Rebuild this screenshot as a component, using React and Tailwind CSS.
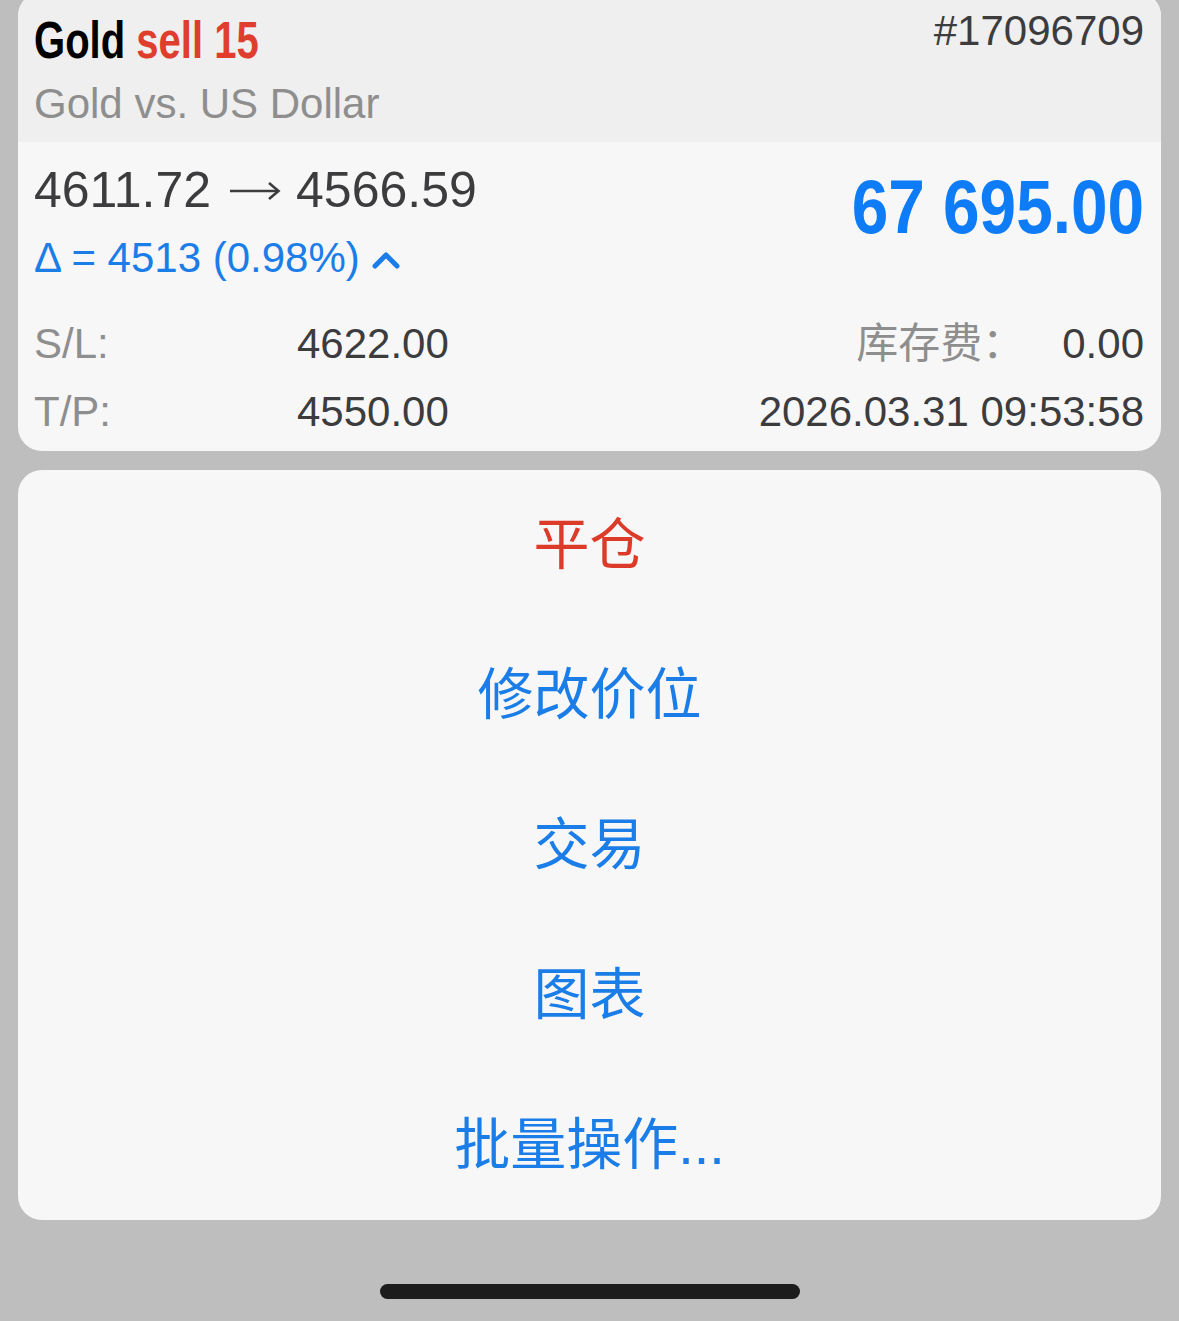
import React from "react";

const sans = { fontFamily: '"Liberation Sans", "Noto Sans CJK SC", Arial, sans-serif' };
const bold = { fontFamily: '"Liberation Sans", Arial, sans-serif' };

function MenuItem({ label, red }) {
  return (
    <div
      className={`h-[150px] flex items-center justify-center text-[56px] leading-none ${red ? "text-[#dc3b2a]" : "text-[#1b7de8]"}`}
      style={sans}
    >
      {label}
    </div>
  );
}

export default function App() {
  return (
    <div className="w-[1179px] h-[1321px] bg-[#bebebe] overflow-hidden flex flex-col items-center" style={sans}>
      {/* Position card */}
      <div className="w-[1143px] -mt-[8px] rounded-[24px] overflow-hidden bg-[#f7f7f7]">
        <div className="h-[150px] bg-[#efefef] pl-4 pr-[17px] flex justify-between items-start">
          <div className="flex flex-col">
            <div
              className="pt-[23px] text-[52px] leading-[50px] font-bold whitespace-nowrap origin-left scale-x-[0.77]"
              style={bold}
            >
              <span className="text-black">Gold</span>{" "}
              <span className="text-[#df3e2c]">sell 15</span>
            </div>
            <div className="mt-[18px] text-[42px] leading-[42px] text-[#8e8e8e]">Gold vs. US Dollar</div>
          </div>
          <div className="pt-[18px] text-[42px] leading-[42px] text-[#3c3c3e]">#17096709</div>
        </div>
        <div className="pl-4 pr-[17px] pb-[6px]">
          <div className="flex justify-between items-start">
            <div className="flex flex-col pt-[23px]">
              <div className="text-[50px] leading-[50px] text-[#3c3c3e] flex items-center">
                <span>4611.72</span>
                <svg width="52" height="24" viewBox="0 0 52 24" className="ml-[18px] mr-[15px] mt-[2px]">
                  <path d="M1 12 H49" stroke="#3c3c3e" strokeWidth="2.6" fill="none" />
                  <path d="M40 4 L49.5 12 L40 20" stroke="#3c3c3e" strokeWidth="2.6" fill="none" strokeLinejoin="miter" />
                </svg>
                <span>4566.59</span>
              </div>
              <div className="mt-[22px] text-[42px] leading-[42px] text-[#1b7de8] flex items-center">
                <span>Δ = 4513 (0.98%)</span>
                <svg width="28" height="20" viewBox="0 0 28 20" className="ml-[12px] mt-[4px]">
                  <path d="M3 16 L14 5 L25 16" fill="none" stroke="#1b7de8" strokeWidth="5" strokeLinecap="round" strokeLinejoin="round" />
                </svg>
              </div>
            </div>
            <div
              className="pt-[27px] text-[76px] leading-[76px] font-bold text-[#0d7cf6] whitespace-nowrap origin-right scale-x-[0.865]"
              style={bold}
            >
              67 695.00
            </div>
          </div>
          <div className="mt-[30px] flex justify-between h-[68px] items-center text-[42px]">
            <div className="flex">
              <span className="w-[263px] text-[#8e8e8e]">S/L:</span>
              <span className="text-[#3c3c3e]">4622.00</span>
            </div>
            <div className="flex">
              <span className="text-[#8e8e8e]">库存费：</span>
              <span className="ml-[38px] text-[#3c3c3e]">0.00</span>
            </div>
          </div>
          <div className="flex justify-between h-[68px] items-center text-[42px]">
            <div className="flex">
              <span className="w-[263px] text-[#8e8e8e]">T/P:</span>
              <span className="text-[#3c3c3e]">4550.00</span>
            </div>
            <span className="text-[#3c3c3e]">2026.03.31 09:53:58</span>
          </div>
        </div>
      </div>

      {/* Action menu */}
      <div className="mt-[19px] w-[1143px] rounded-[24px] bg-[#f7f7f7] flex flex-col">
        <MenuItem label="平仓" red />
        <MenuItem label="修改价位" />
        <MenuItem label="交易" />
        <MenuItem label="图表" />
        <MenuItem label="批量操作..." />
      </div>

      <div className="mt-[64px] w-[420px] h-[15px] rounded-full bg-[#1c1c1c]" />
    </div>
  );
}
